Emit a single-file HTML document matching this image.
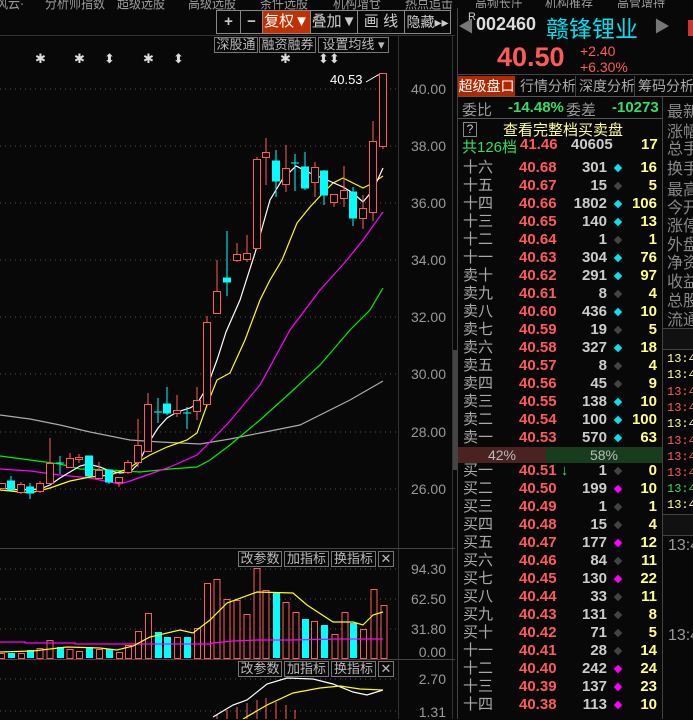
<!DOCTYPE html>
<html><head><meta charset="utf-8"><style>
*{margin:0;padding:0;box-sizing:border-box}
body{width:693px;height:719px;background:#080808;overflow:hidden;position:relative;font-family:"Liberation Sans","Noto Sans CJK SC",sans-serif;color:#aaa}
.a{position:absolute;white-space:nowrap}
.btn{position:absolute;border:1px solid #888;color:#ccc;font-size:15px;text-align:center;line-height:22px;height:24px;white-space:nowrap;overflow:hidden}
.sb{position:absolute;border:1px solid #777;color:#bbb;font-size:13px;text-align:center;line-height:14px;height:16px;white-space:nowrap;overflow:hidden}
.ob{position:absolute;left:458px;width:204px;height:18px;font-size:15px;line-height:18px;white-space:nowrap}
.ob .l{position:absolute;left:5px;color:#aaa}
.ob .p{position:absolute;left:61px;color:#ff5a5a;font-weight:bold}
.ob .v{position:absolute;right:55px;color:#ccc;font-weight:bold}
.ob .d{position:absolute;left:157px;top:6px;width:6px;height:6px;transform:rotate(45deg)}
.ob .n{position:absolute;right:5px;color:#ffff88;font-weight:bold}
.c{background:#00e5ee}.g{background:#444}.m{background:#ff00ff}
.rl{position:absolute;left:667px;font-size:16px;color:#888;white-space:nowrap}
.t{position:absolute;left:667px;font-size:12px;font-family:"Liberation Mono",monospace;white-space:nowrap}
.nv{position:absolute;top:-8px;font-size:15px;color:#999;white-space:nowrap;transform:scaleX(0.8);transform-origin:0 0}
</style></head><body>
<div class="nv" style="left:-4px">风云·</div>
<div class="nv" style="left:45px">分析师指数</div>
<div class="nv" style="left:117px">超级选股</div>
<div class="nv" style="left:188px">高级选股</div>
<div class="nv" style="left:260px">条件选股</div>
<div class="nv" style="left:333px">机构增仓</div>
<div class="nv" style="left:405px">热点追击</div>
<div class="nv" style="left:475px">高频长庄</div>
<div class="nv" style="left:545px">机构推荐</div>
<div class="nv" style="left:617px">高管增持</div>
<div class="btn" style="left:216px;top:10px;width:25px;font-weight:bold">+</div>
<div class="btn" style="left:240px;top:10px;width:23px;font-weight:bold">−</div>
<div class="btn" style="left:262px;top:10px;width:49px;background:#c03000;color:#fff">复权▼</div>
<div class="btn" style="left:310px;top:10px;width:48px">叠加▼</div>
<div class="btn" style="left:357px;top:10px;width:48px">画 线</div>
<div class="btn" style="left:404px;top:10px;width:47px;font-size:14px">隐藏▸▸</div>
<div class="a" style="left:0;top:35px;width:455px;height:1px;background:#333"></div>
<div class="sb" style="left:214px;top:37px;width:44px">深股通</div>
<div class="sb" style="left:259px;top:37px;width:57px">融资融券</div>
<div class="sb" style="left:318px;top:37px;width:71px">设置均线 ▾</div>
<div class="a" style="left:398px;top:36px;width:1px;height:683px;background:#333"></div>
<div class="a" style="left:452px;top:36px;width:1px;height:683px;background:#333"></div>
<div class="a" style="left:453px;top:350px;width:4px;height:120px;background:#444"></div>
<div style="position:absolute;left:400px;width:46px;text-align:right;font-size:14px;color:#999">
<div class="a" style="right:0;top:81px">40.00</div><div class="a" style="right:0;top:138px">38.00</div>
<div class="a" style="right:0;top:195px">36.00</div><div class="a" style="right:0;top:252px">34.00</div>
<div class="a" style="right:0;top:309px">32.00</div><div class="a" style="right:0;top:366px">30.00</div>
<div class="a" style="right:0;top:424px">28.00</div><div class="a" style="right:0;top:481px">26.00</div>
<div class="a" style="right:0;top:561px">94.30</div><div class="a" style="right:0;top:591px">62.50</div>
<div class="a" style="right:0;top:621px">31.80</div><div class="a" style="right:0;top:644px">0.00</div>
<div class="a" style="right:0;top:671px">2.70</div><div class="a" style="right:0;top:704px">1.31</div>
</div>
<svg class="a" style="left:0;top:0" width="455" height="719">
<g stroke="#555" stroke-dasharray="1 4">
<line x1="0" y1="89" x2="397" y2="89"/><line x1="0" y1="146" x2="397" y2="146"/><line x1="0" y1="203" x2="397" y2="203"/><line x1="0" y1="260" x2="397" y2="260"/><line x1="0" y1="317" x2="397" y2="317"/><line x1="0" y1="374" x2="397" y2="374"/><line x1="0" y1="432" x2="397" y2="432"/><line x1="0" y1="489" x2="397" y2="489"/>
<line x1="0" y1="569" x2="397" y2="569"/><line x1="0" y1="599" x2="397" y2="599"/><line x1="0" y1="629" x2="397" y2="629"/>
<line x1="0" y1="679" x2="397" y2="679"/><line x1="0" y1="711" x2="397" y2="711"/>
</g>
<line x1="0" y1="548.5" x2="455" y2="548.5" stroke="#444"/>
<line x1="0" y1="659.5" x2="455" y2="659.5" stroke="#444"/>
<g fill="#ddd" font-size="13" font-family="Liberation Sans,sans-serif">
<text x="35" y="63">✱</text><text x="74" y="63">✱</text><text x="104" y="63">⬍</text><text x="143" y="63">✱</text><text x="173" y="63">⬍</text><text x="280" y="63">✱</text><text x="318" y="63">⬍⬍</text>
</g>
<text x="330" y="84" fill="#fff" font-size="13" font-family="Liberation Sans,sans-serif">40.53</text>
<polyline points="366,82 378,75 383,74" fill="none" stroke="#fff"/>
<polyline fill="none" stroke="#aaa" stroke-width="1.2" points="0,415 30,419 60,425 90,432 130,440 160,442 200,444 230,439 260,433 300,425 350,400 383,381"/>
<polyline fill="none" stroke="#00ee00" stroke-width="1.2" points="0,456 30,460 60,464 80,469 110,470 140,472 170,469 197,467 210,460 230,445 260,420 290,393 320,365 350,330 370,310 383,288"/>
<polyline fill="none" stroke="#ff00ff" stroke-width="1.2" points="0,469 30,471 60,475 90,478 110,482 120,484 130,481 150,474 170,467 197,455 210,442 230,421 260,385 290,330 320,290 347,260 363,240 383,212"/>
<polyline fill="none" stroke="#ffff00" stroke-width="1.2" points="0,490 30,493 50,488 70,481 90,477 110,475 128,469 138,462 150,455 167,447 187,440 197,433 207,405 217,380 230,373 245,340 260,300 270,280 282,260 297,223 310,207 323,193 333,183 343,178 353,183 363,188 373,183 383,176"/>
<polyline fill="none" stroke="#fff" stroke-width="1.2" points="0,488 20,490 40,489 50,485 60,478 70,472 80,466 88,464 100,467 110,471 120,473 130,472 138,464 148,444 158,428 167,418 177,412 190,408 197,404 207,387 217,360 226,332 240,300 255,253 270,200 282,180 296,166 310,173 327,180 343,187 353,193 363,202 373,190 383,168"/>
<g stroke="#ff5a5a" fill="#080808">
<line x1="2" y1="483" x2="2" y2="488"/><rect x="-1.5" y="483.5" width="7" height="5"/>
<line x1="21" y1="482" x2="21" y2="494"/><rect x="17.5" y="484.5" width="7" height="8"/>
<line x1="40" y1="481" x2="40" y2="493"/><rect x="36.5" y="483.5" width="7" height="8"/>
<line x1="50" y1="438" x2="50" y2="483"/><rect x="46.5" y="463.5" width="7" height="20"/>
<line x1="70" y1="453" x2="70" y2="467"/><rect x="66.5" y="458.5" width="7" height="9"/>
<line x1="79" y1="454" x2="79" y2="463"/><rect x="75.5" y="457.5" width="7" height="2"/>
<line x1="99" y1="462" x2="99" y2="478"/><rect x="95.5" y="470.5" width="7" height="8"/>
<line x1="119" y1="477" x2="119" y2="487"/><rect x="115.5" y="477.5" width="7" height="5"/>
<line x1="128" y1="460" x2="128" y2="474"/><rect x="124.5" y="462.5" width="7" height="10"/>
<line x1="138" y1="419" x2="138" y2="467"/><rect x="134.5" y="445.5" width="7" height="17"/>
<line x1="148" y1="393" x2="148" y2="451"/><rect x="144.5" y="404.5" width="7" height="47"/>
<line x1="177" y1="395" x2="177" y2="417"/><rect x="173.5" y="410.5" width="7" height="3"/>
<line x1="197" y1="387" x2="197" y2="420"/><rect x="193.5" y="400.5" width="7" height="11"/>
<line x1="207" y1="316" x2="207" y2="404"/><rect x="203.5" y="322.5" width="7" height="82"/>
<line x1="217" y1="260" x2="217" y2="313"/><rect x="213.5" y="291.5" width="7" height="22"/>
<line x1="237" y1="243" x2="237" y2="262"/><rect x="233.5" y="254.5" width="7" height="6"/>
<line x1="247" y1="235" x2="247" y2="262"/><rect x="243.5" y="253.5" width="7" height="6"/>
<line x1="257" y1="157" x2="257" y2="248"/><rect x="253.5" y="159.5" width="7" height="89"/>
<line x1="266" y1="138" x2="266" y2="185"/><rect x="262.5" y="152.5" width="7" height="5"/>
<line x1="286" y1="145" x2="286" y2="192"/><rect x="282.5" y="168.5" width="7" height="16"/>
<line x1="315" y1="162" x2="315" y2="197"/><rect x="311.5" y="167.5" width="7" height="15"/>
<line x1="334" y1="194" x2="334" y2="207"/><rect x="330.5" y="194.5" width="7" height="8"/>
<line x1="344" y1="166" x2="344" y2="207"/><rect x="340.5" y="190.5" width="7" height="8"/>
<line x1="363" y1="195" x2="363" y2="229"/><rect x="359.5" y="208.5" width="7" height="10"/>
<line x1="373" y1="121" x2="373" y2="221"/><rect x="369.5" y="141.5" width="7" height="71"/>
<line x1="383" y1="146" x2="383" y2="149"/><rect x="379.5" y="73.5" width="7" height="73"/>
</g>
<g stroke="#00ffff" fill="#00ffff">
<line x1="11" y1="476" x2="11" y2="490"/><rect x="7.5" y="481" width="7" height="9"/>
<line x1="30" y1="483" x2="30" y2="499"/><rect x="26.5" y="487" width="7" height="6"/>
<line x1="60" y1="456" x2="60" y2="474"/><line x1="56" y1="463" x2="64" y2="463"/>
<line x1="89" y1="456" x2="89" y2="476"/><rect x="85.5" y="456" width="7" height="20"/>
<line x1="109" y1="470" x2="109" y2="484"/><rect x="105.5" y="470" width="7" height="12"/>
<line x1="158" y1="398" x2="158" y2="423"/><line x1="154" y1="412" x2="162" y2="412"/>
<line x1="167" y1="387" x2="167" y2="415"/><rect x="163.5" y="404" width="7" height="9"/>
<line x1="187" y1="407" x2="187" y2="429"/><line x1="183" y1="413" x2="191" y2="413"/>
<line x1="227" y1="231" x2="227" y2="296"/><rect x="223.5" y="278" width="7" height="4"/>
<line x1="276" y1="150" x2="276" y2="197"/><rect x="272.5" y="161" width="7" height="20"/>
<line x1="295" y1="154" x2="295" y2="191"/><line x1="291" y1="163" x2="299" y2="163"/>
<line x1="305" y1="152" x2="305" y2="190"/><rect x="301.5" y="167" width="7" height="21"/>
<line x1="324" y1="170" x2="324" y2="205"/><rect x="320.5" y="171" width="7" height="24"/>
<line x1="353" y1="187" x2="353" y2="226"/><rect x="349.5" y="192" width="7" height="26"/>
</g>
<g stroke="#ff5a5a" fill="#080808">
<rect x="-1.5" y="653.5" width="6" height="5"/><rect x="18.5" y="653.5" width="6" height="5"/><rect x="37" y="648.5" width="6" height="10"/><rect x="47" y="640.5" width="6" height="18"/><rect x="67" y="649.5" width="6" height="9"/><rect x="76.5" y="651.5" width="6" height="7"/><rect x="96.5" y="649.5" width="6" height="9"/><rect x="116.5" y="652.5" width="6" height="6"/><rect x="125.5" y="645.5" width="6" height="13"/><rect x="135.5" y="631.5" width="6" height="27"/><rect x="145.5" y="613.5" width="6" height="45"/><rect x="174.5" y="637.5" width="6" height="21"/><rect x="194.5" y="628.5" width="6" height="30"/><rect x="204.5" y="583.5" width="6" height="75"/><rect x="214" y="579.5" width="6" height="79"/><rect x="224" y="599.5" width="6" height="59"/><rect x="234" y="600.5" width="6" height="58"/><rect x="244" y="614.5" width="6" height="44"/><rect x="254" y="568.5" width="6" height="90"/><rect x="263" y="590.5" width="6" height="68"/><rect x="283" y="602.5" width="6" height="56"/><rect x="293" y="612.5" width="6" height="46"/><rect x="311.5" y="621.5" width="6" height="37"/><rect x="332" y="634.5" width="6" height="24"/><rect x="342" y="612.5" width="6" height="46"/><rect x="360.5" y="629.5" width="6" height="29"/><rect x="371" y="589.5" width="6" height="69"/><rect x="381" y="605.5" width="6" height="53"/>
</g>
<g fill="#00ffff">
<rect x="8" y="653" width="7" height="5"/><rect x="27" y="650" width="7" height="8"/><rect x="57" y="647" width="7" height="11"/><rect x="86" y="647" width="7" height="11"/><rect x="106" y="649" width="7" height="9"/><rect x="155" y="632" width="7" height="26"/><rect x="164" y="637" width="7" height="21"/><rect x="184" y="637" width="7" height="21"/><rect x="273" y="593" width="7" height="65"/><rect x="302" y="619" width="7" height="39"/><rect x="321" y="625" width="7" height="33"/><rect x="350" y="623" width="7" height="35"/>
</g>
<polyline fill="none" stroke="#ff00ff" stroke-width="1.2" points="0,642 25,642 25,643 75,643 75,644 120,644 210,644 213,643 233,641 257,640 290,640 340,639 383,639"/>
<polyline fill="none" stroke="#ffff00" stroke-width="1.2" points="0,652 33,651 67,647 100,648 117,650 133,646 150,637 180,630 193,633 210,620 227,603 257,592 293,593 307,605 333,622 353,622 363,625 373,615 383,612"/>
<g stroke="#ff5a5a"><line x1="217" y1="719" x2="217" y2="715"/><line x1="227" y1="719" x2="227" y2="710"/><line x1="237" y1="719" x2="237" y2="707"/><line x1="247" y1="719" x2="247" y2="703"/><line x1="257" y1="719" x2="257" y2="700"/><line x1="266" y1="719" x2="266" y2="698"/><line x1="276" y1="719" x2="276" y2="702"/><line x1="286" y1="719" x2="286" y2="705"/><line x1="295" y1="719" x2="295" y2="710"/></g>
<polyline fill="none" stroke="#fff" stroke-width="1.2" points="213,717 233,705 247,700 267,684 287,678 313,679 333,684 353,692 367,695 383,690"/>
<polyline fill="none" stroke="#ffff00" stroke-width="1.2" points="243,719 267,705 293,693 320,688 340,686 360,689 383,690"/>
</svg>
<div class="sb" style="left:238px;top:551px;width:44px;height:16px">改参数</div>
<div class="sb" style="left:284px;top:551px;width:45px;height:16px">加指标</div>
<div class="sb" style="left:331px;top:551px;width:45px;height:16px">换指标</div>
<div class="sb" style="left:378px;top:551px;width:16px;height:16px">✕</div>
<div class="sb" style="left:238px;top:661px;width:44px;height:16px">改参数</div>
<div class="sb" style="left:284px;top:661px;width:45px;height:16px">加指标</div>
<div class="sb" style="left:331px;top:661px;width:45px;height:16px">换指标</div>
<div class="sb" style="left:378px;top:661px;width:16px;height:16px">✕</div>

<div class="a" style="left:457px;top:8px;width:236px;height:711px;background:#080808"></div>
<div class="a" style="left:457px;top:8px;width:1px;height:711px;background:#444"></div>
<div class="a" style="left:458px;top:13px;font-size:16px;color:#777">◀</div>
<div class="a" style="left:468px;top:11px;font-size:11px;color:#ccc">R</div>
<div class="a" style="left:476px;top:14px;font-size:18px;color:#ddd;font-weight:bold">002460</div>
<div class="a" style="left:546px;top:10px;font-size:23px;color:#00e0ee">赣锋锂业</div>
<div class="a" style="left:654px;top:13px;font-size:16px;color:#777">▶</div>
<div class="a" style="left:688px;top:20px;width:5px;height:16px;background:#c33"></div>
<div class="a" style="left:497px;top:42px;font-size:27px;color:#ff5a5a;font-weight:bold">40.50</div>
<div class="a" style="left:580px;top:43px;font-size:14px;color:#ff5a5a">+2.40</div>
<div class="a" style="left:580px;top:59px;font-size:14px;color:#ff5a5a">+6.30%</div>
<div class="a" style="left:458px;top:74px;width:235px;height:1px;background:#444"></div>
<div class="a" style="left:458px;top:76px;width:57px;height:20px;background:#b02800;color:#fff;font-size:14px;line-height:20px;text-align:center">超级盘口</div>
<div class="a" style="left:520px;top:76px;font-size:14px;line-height:20px;color:#aaa">行情分析</div>
<div class="a" style="left:575px;top:76px;width:1px;height:20px;background:#444"></div>
<div class="a" style="left:579px;top:76px;font-size:14px;line-height:20px;color:#aaa">深度分析</div>
<div class="a" style="left:634px;top:76px;width:1px;height:20px;background:#444"></div>
<div class="a" style="left:638px;top:76px;font-size:14px;line-height:20px;color:#aaa">筹码分析</div>
<div class="a" style="left:458px;top:96px;width:235px;height:1px;background:#555"></div>
<div class="a" style="left:462px;top:99px;font-size:15px;color:#999">委比</div>
<div class="a" style="left:508px;top:99px;font-size:15px;color:#33dd66;font-weight:bold">-14.48%</div>
<div class="a" style="left:566px;top:99px;font-size:15px;color:#999">委差</div>
<div class="a" style="left:612px;top:99px;font-size:15px;color:#33dd66;font-weight:bold">-10273</div>
<div class="a" style="left:458px;top:118px;width:204px;height:1px;background:#555"></div>
<div class="a" style="left:662px;top:97px;width:1px;height:622px;background:#444"></div>
<div class="a" style="left:463px;top:122px;width:14px;height:15px;border:1px solid #888;font-size:12px;line-height:13px;text-align:center;color:#ccc">?</div>
<div class="a" style="left:503px;top:119px;font-size:15px;color:#ffff99">查看完整档买卖盘</div>
<div class="a" style="left:462px;top:136px;font-size:15px;color:#33dd66">共126档</div>
<div class="a" style="left:520px;top:136px;font-size:15px;color:#ff5a5a;font-weight:bold">41.46</div>
<div class="a" style="left:571px;top:136px;font-size:15px;color:#ccc;font-weight:bold">40605</div>
<div class="a" style="left:641px;top:136px;font-size:15px;color:#ffff88;font-weight:bold">17</div>

<div class="ob" style="top:159px"><span class="l">十六</span><span class="p">40.68</span><span class="v">301</span><i class="d c"></i><span class="n">16</span></div>
<div class="ob" style="top:177px"><span class="l">十五</span><span class="p">40.67</span><span class="v">15</span><i class="d g"></i><span class="n">5</span></div>
<div class="ob" style="top:195px"><span class="l">十四</span><span class="p">40.66</span><span class="v">1802</span><i class="d c"></i><span class="n">106</span></div>
<div class="ob" style="top:213px"><span class="l">十三</span><span class="p">40.65</span><span class="v">140</span><i class="d c"></i><span class="n">13</span></div>
<div class="ob" style="top:231px"><span class="l">十二</span><span class="p">40.64</span><span class="v">1</span><i class="d g"></i><span class="n">1</span></div>
<div class="ob" style="top:249px"><span class="l">十一</span><span class="p">40.63</span><span class="v">304</span><i class="d c"></i><span class="n">76</span></div>
<div class="ob" style="top:267px"><span class="l">卖十</span><span class="p">40.62</span><span class="v">291</span><i class="d c"></i><span class="n">97</span></div>
<div class="ob" style="top:285px"><span class="l">卖九</span><span class="p">40.61</span><span class="v">8</span><i class="d g"></i><span class="n">4</span></div>
<div class="ob" style="top:303px"><span class="l">卖八</span><span class="p">40.60</span><span class="v">436</span><i class="d c"></i><span class="n">10</span></div>
<div class="ob" style="top:321px"><span class="l">卖七</span><span class="p">40.59</span><span class="v">19</span><i class="d g"></i><span class="n">5</span></div>
<div class="ob" style="top:339px"><span class="l">卖六</span><span class="p">40.58</span><span class="v">327</span><i class="d c"></i><span class="n">18</span></div>
<div class="ob" style="top:357px"><span class="l">卖五</span><span class="p">40.57</span><span class="v">8</span><i class="d g"></i><span class="n">4</span></div>
<div class="ob" style="top:375px"><span class="l">卖四</span><span class="p">40.56</span><span class="v">45</span><i class="d g"></i><span class="n">9</span></div>
<div class="ob" style="top:393px"><span class="l">卖三</span><span class="p">40.55</span><span class="v">138</span><i class="d c"></i><span class="n">10</span></div>
<div class="ob" style="top:411px"><span class="l">卖二</span><span class="p">40.54</span><span class="v">100</span><i class="d c"></i><span class="n">100</span></div>
<div class="ob" style="top:429px"><span class="l">卖一</span><span class="p">40.53</span><span class="v">570</span><i class="d c"></i><span class="n">63</span></div>
<div class="a" style="left:458px;top:447px;width:88px;height:16px;background:#4a2222;color:#bbb;font-size:14px;line-height:16px;text-align:center">42%</div>
<div class="a" style="left:546px;top:447px;width:116px;height:16px;background:#173d1f;color:#bbb;font-size:14px;line-height:16px;text-align:center">58%</div>
<div class="ob" style="top:462px"><span class="l">买一</span><span class="p">40.51 <span style="color:#33dd66">↓</span></span><span class="v">1</span><i class="d g"></i><span class="n">0</span></div>
<div class="ob" style="top:480px"><span class="l">买二</span><span class="p">40.50</span><span class="v">199</span><i class="d m"></i><span class="n">10</span></div>
<div class="ob" style="top:498px"><span class="l">买三</span><span class="p">40.49</span><span class="v">1</span><i class="d g"></i><span class="n">1</span></div>
<div class="ob" style="top:516px"><span class="l">买四</span><span class="p">40.48</span><span class="v">15</span><i class="d g"></i><span class="n">4</span></div>
<div class="ob" style="top:534px"><span class="l">买五</span><span class="p">40.47</span><span class="v">177</span><i class="d m"></i><span class="n">12</span></div>
<div class="ob" style="top:552px"><span class="l">买六</span><span class="p">40.46</span><span class="v">84</span><i class="d g"></i><span class="n">11</span></div>
<div class="ob" style="top:570px"><span class="l">买七</span><span class="p">40.45</span><span class="v">130</span><i class="d m"></i><span class="n">22</span></div>
<div class="ob" style="top:588px"><span class="l">买八</span><span class="p">40.44</span><span class="v">33</span><i class="d g"></i><span class="n">11</span></div>
<div class="ob" style="top:606px"><span class="l">买九</span><span class="p">40.43</span><span class="v">131</span><i class="d g"></i><span class="n">8</span></div>
<div class="ob" style="top:624px"><span class="l">买十</span><span class="p">40.42</span><span class="v">71</span><i class="d g"></i><span class="n">5</span></div>
<div class="ob" style="top:642px"><span class="l">十一</span><span class="p">40.41</span><span class="v">28</span><i class="d g"></i><span class="n">14</span></div>
<div class="ob" style="top:660px"><span class="l">十二</span><span class="p">40.40</span><span class="v">242</span><i class="d m"></i><span class="n">24</span></div>
<div class="ob" style="top:678px"><span class="l">十三</span><span class="p">40.39</span><span class="v">137</span><i class="d m"></i><span class="n">23</span></div>
<div class="ob" style="top:696px"><span class="l">十四</span><span class="p">40.38</span><span class="v">113</span><i class="d m"></i><span class="n">10</span></div>

<div class="rl" style="top:98px">最新</div><div class="rl" style="top:118px">涨幅</div><div class="rl" style="top:135px">总手</div><div class="rl" style="top:155px">换手</div><div class="rl" style="top:176px">最高</div><div class="rl" style="top:194px">今开</div><div class="rl" style="top:212px">涨停</div><div class="rl" style="top:231px">外盘</div><div class="rl" style="top:249px">净资</div><div class="rl" style="top:268px">收益</div><div class="rl" style="top:287px">总股</div><div class="rl" style="top:306px">流通</div>
<div class="a" style="left:663px;top:328px;width:30px;height:22px;background:#111;border-top:1px solid #444;border-bottom:1px solid #444"></div>
<div class="t" style="top:352px;color:#ffff99">13:42</div>
<div class="t" style="top:368px;color:#ffff99">13:42</div>
<div class="t" style="top:385px;color:#ff5a5a">13:42</div>
<div class="t" style="top:401px;color:#ff5a5a">13:42</div>
<div class="t" style="top:417px;color:#ffff99">13:42</div>
<div class="t" style="top:434px;color:#ff5a5a">13:42</div>
<div class="t" style="top:450px;color:#ff5a5a">13:43</div>
<div class="t" style="top:466px;color:#ff5a5a">13:43</div>
<div class="t" style="top:482px;color:#33dd66">13:43</div>
<div class="t" style="top:498px;color:#ffff99">13:43</div>
<div class="a" style="left:663px;top:514px;width:30px;height:22px;background:#111;border-top:1px solid #444;border-bottom:1px solid #444"></div>
<div class="a" style="left:668px;top:537px;font-size:16px;color:#999">13:4</div>
<div class="a" style="left:668px;top:627px;font-size:16px;color:#999">13:4</div>
</body></html>
